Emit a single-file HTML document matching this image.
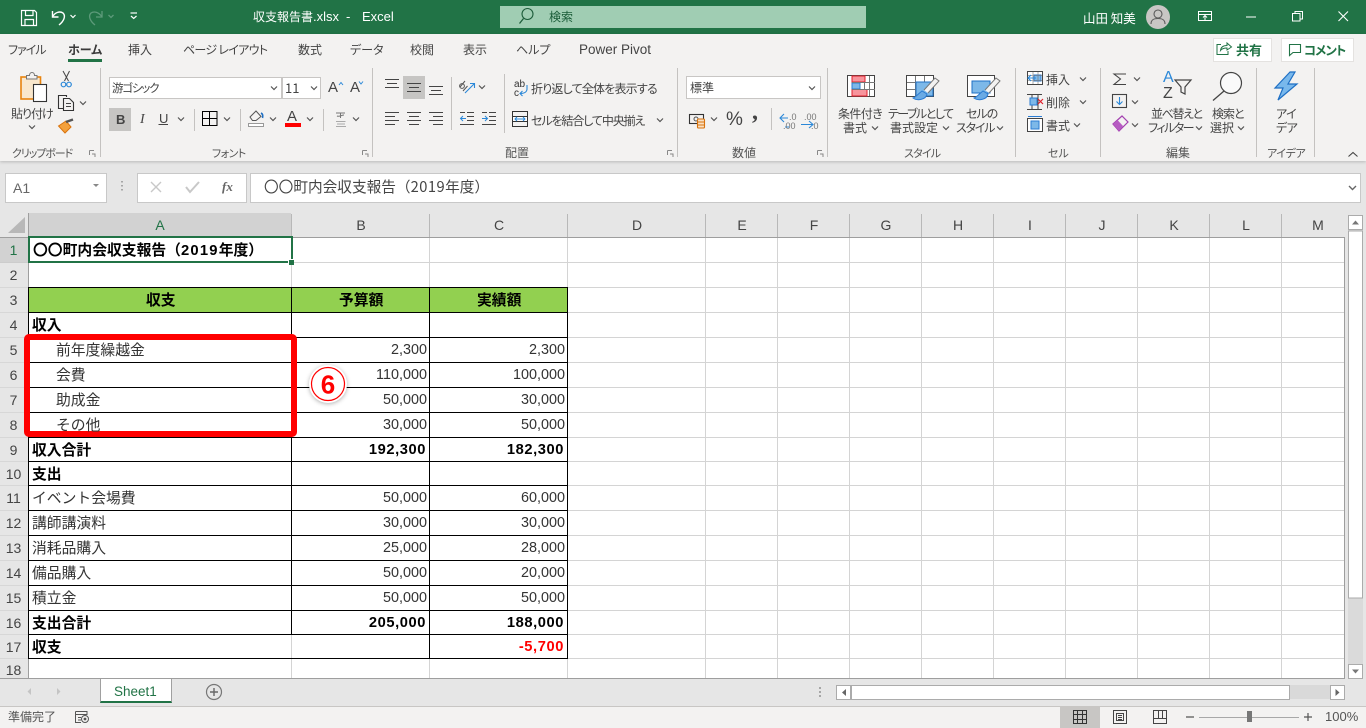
<!DOCTYPE html>
<html lang="ja"><head><meta charset="utf-8"><title>収支報告書.xlsx - Excel</title>
<style>
html,body{margin:0;padding:0;width:1366px;height:728px;overflow:hidden;background:#e6e6e6}
body{position:relative;font-family:"Liberation Sans","Noto Sans CJK JP",sans-serif;color:#444}
svg.o{position:absolute;left:0;top:0}
.b{position:absolute}
.t{position:absolute;white-space:nowrap;line-height:14px;font-size:12px;margin-top:1px;font-feature-settings:"palt";font-family:"Noto Sans CJK JP","Liberation Sans",sans-serif;color:#444}
.g{font-size:11px;color:#555}
.w{color:#fff}
.c{position:absolute;white-space:nowrap;font-size:14.8px;line-height:24px;height:24px;margin-top:1px;color:#333;font-family:"Liberation Sans","Noto Sans CJK JP",sans-serif}
.n{font-size:14.4px;text-align:right;width:130px;margin-top:0}
.bd{font-weight:bold;color:#000}
.n.bd{font-size:14.67px;letter-spacing:.6px}
.h{position:absolute;width:72px;text-align:center;font-size:14px;line-height:24px;top:213px;color:#444}
.r{position:absolute;left:0;width:27px;text-align:center;font-size:14px;line-height:24px;color:#444}
</style></head><body>
<div class="b" style="left:0;top:0;width:1366px;height:34px;background:#217346"></div>
<div class="b" style="left:0;top:34px;width:1366px;height:127px;background:#f3f2f1;box-shadow:0 1px 3px rgba(0,0,0,.2)"></div>
<div class="b" style="left:500px;top:6px;width:366px;height:22px;background:#a0cdb3"></div>
<div class="b" style="left:1213px;top:38px;width:57px;height:22px;background:#fff;border:1px solid #e4e2e0;box-sizing:content-box"></div>
<div class="b" style="left:1281px;top:38px;width:71px;height:22px;background:#fff;border:1px solid #e4e2e0"></div>
<div class="b" style="left:109px;top:77px;width:171px;height:20px;background:#fff;border:1px solid #c8c6c4"></div>
<div class="b" style="left:282px;top:77px;width:37px;height:20px;background:#fff;border:1px solid #c8c6c4"></div>
<div class="b" style="left:109px;top:108px;width:22px;height:23px;background:#c6c5c3"></div>
<div class="b" style="left:403px;top:76px;width:22px;height:23px;background:#c6c5c3"></div>
<div class="b" style="left:686px;top:76px;width:133px;height:21px;background:#fff;border:1px solid #c8c6c4"></div>
<div class="b" style="left:5px;top:173px;width:100px;height:28px;background:#fff;border:1px solid #c8c8c8"></div>
<div class="b" style="left:137px;top:173px;width:108px;height:28px;background:#fff;border:1px solid #c8c8c8"></div>
<div class="b" style="left:250px;top:173px;width:1109px;height:28px;background:#fff;border:1px solid #c8c8c8"></div>
<div class="b" style="left:29px;top:238px;width:1316px;height:441px;background:#fff"></div>
<div class="b" style="left:29px;top:213px;width:262px;height:24px;background:#d2d2d2"></div>
<div class="b" style="left:0;top:238px;width:28px;height:25px;background:#d2d2d2"></div>
<div class="b" style="left:29px;top:288px;width:538px;height:24px;background:#92d050"></div>
<div class="b" style="left:0;top:679px;width:1366px;height:27px;background:#e6e6e6"></div>
<div class="b" style="left:0;top:707px;width:1366px;height:21px;background:#f3f2f1;border-top:0"></div>
<div class="b" style="left:1060px;top:707px;width:40px;height:21px;background:#c8c6c4"></div>
<div class="b" style="left:100px;top:678px;width:72px;height:25px;background:#fff;border-left:1px solid #a0a0a0;border-right:1px solid #a0a0a0;box-sizing:border-box;border-bottom:2px solid #217346"></div>

<svg class="o" width="1366" height="728" viewBox="0 0 1366 728" fill="none">
<defs><path id="ch" d="M-3 -1.5L0 1.5L3 -1.5" stroke="#555" stroke-width="1.2"/>
<path id="la" d="M-3 -3h3v3" stroke="#888" stroke-width="1"/></defs>
<!-- grid lines -->
<g stroke="#d4d4d4" shape-rendering="crispEdges">
<path d="M29 262.500H1345M29 287.500H1345M29 312.500H1345M29 337.500H1345M29 362.500H1345M29 387.500H1345M29 412.500H1345M29 437.500H1345M29 461.500H1345M29 485.500H1345M29 510.500H1345M29 535.500H1345M29 560.500H1345M29 585.500H1345M29 610.500H1345M29 634.500H1345M29 658.500H1345"/>
<path d="M291.500 238V679M429.500 238V679M567.500 238V679M705.500 238V679M777.500 238V679M849.500 238V679M921.500 238V679M993.500 238V679M1065.500 238V679M1137.500 238V679M1209.500 238V679M1281.500 238V679"/>
</g>
<g stroke="#c6c6c6" shape-rendering="crispEdges">
<path d="M0 262.500H28M0 287.500H28M0 312.500H28M0 337.500H28M0 362.500H28M0 387.500H28M0 412.500H28M0 437.500H28M0 461.500H28M0 485.500H28M0 510.500H28M0 535.500H28M0 560.500H28M0 585.500H28M0 610.500H28M0 634.500H28M0 658.500H28" opacity=".45"/>
<path d="M291.500 214V237M429.500 214V237M567.500 214V237M705.500 214V237M777.500 214V237M849.500 214V237M921.500 214V237M993.500 214V237M1065.500 214V237M1137.500 214V237M1209.500 214V237M1281.500 214V237" stroke="#b8b8b8"/>
</g>
<g stroke="#9e9e9e" shape-rendering="crispEdges">
<path d="M0 237.500H1345M28.500 213V679M1344.500 237V679M0 678.500H1345"/>
</g>
<path d="M8 233H25V217Z" fill="#b8b8b8"/>
<!-- table borders -->
<g stroke="#000" shape-rendering="crispEdges">
<path d="M29 287.500H568M29 312.500H568M29 337.500H568M29 362.500H568M29 387.500H568M29 412.500H568M29 437.500H568M29 461.500H568M29 485.500H568M29 510.500H568M29 535.500H568M29 560.500H568M29 585.500H568M29 610.500H568M29 634.500H568M29 658.500H568"/>
<path d="M28.500 287V659M291.500 287V635M429.500 287V659M567.500 287V659"/>
</g>
<!-- selection -->
<rect x="29" y="237" width="263" height="25" stroke="#217346" stroke-width="2" shape-rendering="crispEdges"/>
<rect x="288" y="259" width="6" height="6" fill="#fff" shape-rendering="crispEdges"/>
<rect x="289" y="260" width="5" height="5" fill="#217346" shape-rendering="crispEdges"/>

<!-- title bar icons -->
<g stroke="#fff" stroke-width="1.2">
<path d="M21.500 10.500H34.500L36.500 12.500V25.500H21.500Z"/><path d="M25.500 10.500V15.500H33V10.500M25 25.500V19.500H33.500V25.500"/>
<path d="M52.500 11V17H58.500" stroke-width="1.400"/><path d="M52.500 17C55 12 60 11 63 13C66 16 64 21 59 25" stroke-width="1.400"/>
<path d="M70.500 15L73 17.500L75.500 15"/>
<path d="M130.500 13H137" /><path d="M131 16L133.700 18.500L136.500 16"/>
</g>
<g stroke="#5d9a7a" stroke-width="1.300"><path d="M102 11V17H96"/><path d="M102 17C99 12 94 11 91 13C88 16 90 21 95 25"/><path d="M108.500 15L111 17.500L113.500 15"/></g>
<g stroke="#fff" stroke-width="1">
<rect x="1198.500" y="11.500" width="13" height="9"/><path d="M1198 14.500H1212M1205 20V16M1203 17.500L1205 15.500L1207 17.500"/>
<path d="M1246 17H1256" /><path d="M1292.500 13.500H1300V21H1292.500ZM1295 13V11.500H1302.500V19H1300"/>
<path d="M1338.500 11.500L1348 21M1348 11.500L1338.500 21" stroke-width="1.100"/>
</g>
<circle cx="527.500" cy="14" r="5.500" stroke="#1d5c3a" stroke-width="1.100"/><path d="M523.500 18.500L519.500 23.500" stroke="#1d5c3a" stroke-width="1.300"/>
<circle cx="1158" cy="17" r="12" fill="#c8c6c4"/>
<circle cx="1158" cy="14" r="4" stroke="#5a5a5a" stroke-width="1.100"/><path d="M1151 24C1151 19.500 1154 18.500 1158 18.500C1162 18.500 1165 19.500 1165 24" stroke="#5a5a5a" stroke-width="1.100"/>
<!-- share/comment -->
<path d="M1221 44.500H1217V54.500H1228V51M1220.500 50.500C1221 46.500 1224 45.500 1227 45.500V43L1231.500 47L1227 50V48C1224.500 48 1222 48.500 1220.500 50.500Z" stroke="#217346" stroke-width="1"/>
<path d="M1289.500 44.500H1300.500V52.500H1293L1289.500 55.500Z" stroke="#217346" stroke-width="1.100"/>
<!-- tab underline -->
<rect x="68" y="59" width="34" height="3" fill="#217346"/>
<!-- separators -->
<g stroke="#c4c2c0" shape-rendering="crispEdges">
<path d="M100.500 68V157M372.500 68V157M677.500 68V157M827.500 68V157M1015.500 68V157M1100.500 68V157M1256.500 68V157M1314.500 68V157"/>
<path d="M194.500 109V131M240.500 109V131M323.500 109V131M451.500 77V130M504.500 74V133M771.500 108V130"/>
</g>
<!-- launchers -->
<g><use href="#la" x="95" y="157"/><use href="#la" x="368" y="157"/><use href="#la" x="673" y="157"/><use href="#la" x="823" y="157"/></g>
<g stroke="#888" fill="none"><path d="M89.500 150.500H94M89.500 150.500V155M362.500 150.500H367M362.500 150.500V155M667.500 150.500H672M667.500 150.500V155M817.500 150.500H822M817.500 150.500V155"/></g>
<!-- clipboard -->
<rect x="21" y="77" width="19.500" height="22" fill="#f9e7cc" stroke="#e8830c" stroke-width="1.600"/>
<path d="M26.500 79V75.500H29.500C29.500 71.500 34.500 71.500 34.500 75.500H37V79Z" fill="#f3f2f1" stroke="#777" stroke-width="1"/>
<rect x="33.500" y="84.500" width="13" height="17" fill="#fff" stroke="#333" stroke-width="1.100"/>
<path d="M63 71L68.500 81M69.500 71L64.500 81" stroke="#444" stroke-width="1"/><circle cx="63.500" cy="84.500" r="2.300" stroke="#2b88d8" stroke-width="1.200"/><circle cx="69" cy="84.500" r="2.300" stroke="#2b88d8" stroke-width="1.200"/>
<path d="M63 108.500H58.500V95.500H66.500V97" stroke="#333" stroke-width="1.100"/><path d="M63.500 98.500H69.500L73.500 102.500V110.500H63.500Z" fill="#f3f2f1" stroke="#333" stroke-width="1.100"/><path d="M66 103.500H71M66 106.500H71" stroke="#444"/>
<path d="M58.500 126L66 121L71 127L65 133Z" fill="#f4a13c" stroke="#d9730d" stroke-width="1"/><path d="M66 122L73 119.500" stroke="#555" stroke-width="2.500"/>
<use href="#ch" x="32" y="127"/><use href="#ch" x="83" y="103"/>
<!-- font -->
<use href="#ch" x="274" y="88"/><use href="#ch" x="314" y="88"/>
<path d="M339 85L341 82.500L343 85" stroke="#2b88d8"/><path d="M359 81.500L361 84L363 81.500" stroke="#2b88d8"/>
<path d="M158.500 124.500H168" stroke="#444"/>
<use href="#ch" x="181" y="119"/><use href="#ch" x="227" y="119"/><use href="#ch" x="273" y="119"/><use href="#ch" x="310" y="119"/><use href="#ch" x="356" y="119"/>
<path d="M202.500 111.500H217V125.500H202.500ZM209.500 111.500V125.500M202.500 118.500H217" stroke="#000" stroke-width="1.100" shape-rendering="crispEdges"/>
<path d="M250 117L256 111L261 116.500L256 120.500H252.500Z" stroke="#555"/><path d="M261 113C263 114 263 116 262.500 118" stroke="#1e6fc4" stroke-width="1.600"/><rect x="248.500" y="123.500" width="15" height="3" fill="#fff" stroke="#999"/>
<rect x="285" y="123" width="16" height="4" fill="#f00"/>
<path d="M336 113H345M340.500 113V118M337 116C339 117 342 115 344 115" stroke="#777"/><path d="M336 121.500H345.500M337 124H345M336 126.500H346" stroke="#aaa"/>
<!-- alignment -->
<g stroke="#444" shape-rendering="crispEdges">
<path d="M385 79.500H399M387 83.500H397M385 87.500H399"/>
<path d="M407 83.500H421M409 87.500H419M407 91.500H421"/>
<path d="M429 86.500H443M431 90.500H441M429 94.500H443"/>
<path d="M385 112.500H399M385 116.500H395M385 120.500H399M385 124.500H395"/>
<path d="M407 112.500H421M409 116.500H419M407 120.500H421M409 124.500H419"/>
<path d="M429 112.500H443M433 116.500H443M429 120.500H443M433 124.500H443"/>
<path d="M460 124.500H474M467 112.500H474M467 116.500H474M467 120.500H474M460 112.500H465M482 124.500H496M489 112.500H496M489 116.500H496M489 120.500H496M482 112.500H487"/>
</g>
<path d="M466 118.500H460.500M463 116L460.500 118.500L463 121M482 118.500H487.500M485 116L487.500 118.500L485 121" stroke="#2b88d8"/>
<path d="M465 93L474 84M470 83.500H474.500V88" stroke="#2b88d8" stroke-width="1.100"/><path d="M460 87L465 81M463 91L467.500 86" stroke="#555"/><circle cx="462" cy="86" r="2.400" stroke="#555"/>
<use href="#ch" x="482" y="87"/>
<path d="M527 85V89C527 92 524 93.500 520 93.500M522.500 91L520 93.500L522.500 96" stroke="#2b88d8" stroke-width="1.100"/>
<rect x="512.500" y="111.500" width="15" height="15" stroke="#333"/><rect x="513" y="116" width="14" height="6" fill="#fff"/><path d="M513 116.500H527M513 121.500H527" stroke="#333"/><path d="M515 119H525M517 117L515 119L517 121M523 117L525 119L523 121" stroke="#2b88d8"/>
<use href="#ch" x="660" y="120"/>
<!-- number -->
<use href="#ch" x="812" y="88"/>
<rect x="689.500" y="114.500" width="14" height="9" stroke="#333" stroke-width="1.100"/><circle cx="696" cy="119" r="2" stroke="#555"/>
<rect x="697.500" y="119" width="7" height="9" rx="1" fill="#f9e0c3" stroke="#d9730d" stroke-width="1.100"/><path d="M698 122H704M698 125H704" stroke="#d9730d"/>
<use href="#ch" x="714" y="119"/>
<path d="M784 114L780 118L784 122M780 118H788M789 127L785 127" stroke="#2b88d8" stroke-width="1.100"/>
<path d="M809 121L813 124.500L809 128M801 124.500H813" stroke="#2b88d8" stroke-width="1.100"/>
<!-- styles -->
<g shape-rendering="crispEdges">
<rect x="847.500" y="75.500" width="27" height="21" stroke="#444" stroke-width="1.100" fill="#fff"/>
<rect x="852" y="76" width="13" height="6" fill="#f7949c" stroke="#e0202c"/><rect x="852" y="83" width="8" height="6" fill="#7db8e8" stroke="#2b7cd3"/><rect x="852" y="89.500" width="15" height="6.500" fill="#f7949c" stroke="#e0202c"/>
<path d="M869.500 76V96M864.500 83V89M852 82.500H875M852 89.500H875" stroke="#777"/>
<rect x="906.500" y="75.500" width="27" height="21" stroke="#444" stroke-width="1.100" fill="#fff"/>
<path d="M915.500 76V96M924.500 76V96M907 82.500H933M907 89.500H933" stroke="#777"/>
<rect x="916" y="82" width="17" height="14" fill="#7db8e8" stroke="#1e6fc4"/>
<rect x="967.500" y="75.500" width="27" height="21" stroke="#444" stroke-width="1.100" fill="#fff"/>
<rect x="972" y="81" width="18" height="12" fill="#7db8e8" stroke="#1e6fc4"/>
</g>
<g><path d="M924 90L935 78L939 81L928 93" fill="#f3f2f1" stroke="#777"/><path d="M922 91C918 94 916 97 913 98C917 101 926 100 927 94Z" fill="#6aaae4" stroke="#2b7cd3"/>
<path d="M985 90L996 78L1000 81L989 93" fill="#f3f2f1" stroke="#777"/><path d="M983 91C979 94 977 97 974 98C978 101 987 100 988 94Z" fill="#6aaae4" stroke="#2b7cd3"/></g>
<!-- cells group -->
<g shape-rendering="crispEdges">
<rect x="1027.500" y="71.500" width="15" height="13" stroke="#444" fill="#fff"/><rect x="1034" y="75" width="7" height="6" fill="#7db8e8" stroke="#2b7cd3"/><path d="M1033 72V84M1038 72V84M1028 75.500H1042M1028 80.500H1042" stroke="#777" opacity=".6"/>
<path d="M1027 94.500H1042M1027 109.500H1042M1032 95V109M1038 95V109" stroke="#444"/><rect x="1030" y="98" width="7" height="7" fill="#7db8e8" stroke="#2b7cd3"/>
<rect x="1027.500" y="118.500" width="15" height="13" stroke="#444" fill="#fff"/><rect x="1031" y="121" width="8" height="8" fill="#7db8e8" stroke="#2b7cd3"/><path d="M1028 116.500H1042" stroke="#2b7cd3"/>
</g>
<path d="M1031 75L1028 78L1031 81M1028 78H1036" stroke="#2b88d8" stroke-width="1.100"/>
<path d="M1038 99L1043 104M1043 99L1038 104" stroke="#e0202c" stroke-width="1.200"/>
<use href="#ch" x="1083" y="79"/><use href="#ch" x="1083" y="102"/><use href="#ch" x="1077" y="125"/>
<!-- edit -->
<path d="M1126 74H1114L1120.500 79L1114 84.500H1126" stroke="#444" stroke-width="1.100"/>
<rect x="1112.500" y="94.500" width="14" height="13" stroke="#444" stroke-width="1.100"/><path d="M1119.500 97V104.500M1116.500 101.500L1119.500 104.500L1122.500 101.500" stroke="#2b88d8" stroke-width="1.100"/>
<path d="M1113 124L1122 116L1128 122L1119 131Z" fill="#f3f2f1" stroke="#a33fb0" stroke-width="1.200"/><path d="M1113 124L1117.500 120L1123 126L1119 131Z" fill="#b65cc2"/>
<use href="#ch" x="1137" y="79"/><use href="#ch" x="1135" y="102"/><use href="#ch" x="1135" y="125"/>
<path d="M1175 80H1191L1185 87V94L1181 92V87Z" stroke="#444" stroke-width="1.200"/>
<circle cx="1231" cy="83" r="10.500" stroke="#444" stroke-width="1.200" fill="#fafafa"/><path d="M1224 91L1213 100.500" stroke="#444" stroke-width="1.300"/>
<path d="M1290 72L1275 88H1283L1278 100L1297 84H1288L1295 72Z" fill="#79b8ec" stroke="#1e6fc4" stroke-width="1.200"/>
<path d="M1348.500 156.500L1353 152.500L1357.500 156.500" stroke="#444" stroke-width="1.100"/>
<!-- other chevrons in style text -->
<use href="#ch" x="875" y="128"/><use href="#ch" x="946" y="128"/><use href="#ch" x="1000" y="128"/><use href="#ch" x="1199" y="128"/><use href="#ch" x="1241" y="128"/>
<!-- formula -->
<path d="M96 185H102L99 188Z" transform="translate(-3 -1)" fill="#888"/>
<path d="M122 180V181.500M122 184V185.500M122 188V189.500" stroke="#a6a6a6" stroke-width="2" transform="translate(0 1)"/>
<path d="M151 182L161 192M161 182L151 192" stroke="#c8c8c8" stroke-width="1.400"/>
<path d="M186 187L190 192L199 182" stroke="#c8c8c8" stroke-width="2"/>
<path d="M1349 186L1352.500 189.500L1356 186" stroke="#666" stroke-width="1.400"/>
<!-- red box -->
<rect x="27" y="337" width="267" height="97" rx="2" stroke="#f00" stroke-width="6"/>
<!-- callout -->
<circle cx="328" cy="384" r="19" fill="#fff" style="filter:drop-shadow(0 1px 2px rgba(0,0,0,.3))"/>
<circle cx="328" cy="384" r="16.500" stroke="#f00" stroke-width="1.200"/>
<text x="328" y="393.500" text-anchor="middle" font-family="Liberation Sans" font-weight="bold" font-size="26" fill="#f00">6</text>
<!-- v scrollbar -->
<rect x="1348" y="215" width="15" height="464" fill="#dadada"/>
<rect x="1348.500" y="215.500" width="14" height="14" fill="#fff" stroke="#ababab"/>
<rect x="1348.500" y="231" width="14" height="367" fill="#fff" stroke="#ababab"/>
<rect x="1348.500" y="664.500" width="14" height="14" fill="#fff" stroke="#ababab"/>
<path d="M1352 224.500H1359L1355.500 220.500Z" fill="#777"/><path d="M1352 669.500H1359L1355.500 673.500Z" fill="#777"/>
<!-- bottom -->
<path d="M0 706.500H1366" stroke="#c8c6c4" shape-rendering="crispEdges"/>
<path d="M31 688V695L27.500 691.500ZM57 688V695L60.500 691.500Z" fill="#c4c4c4"/>
<circle cx="214" cy="692" r="7.500" stroke="#777" stroke-width="1.200"/><path d="M214 688V696M210 692H218" stroke="#666" stroke-width="1.400"/>
<path d="M820 687V689M820 691V693M820 695V697" stroke="#a6a6a6" stroke-width="2"/>
<rect x="1289" y="685" width="42" height="14" fill="#d9d9d9"/>
<rect x="836.500" y="685.500" width="14" height="14" fill="#fff" stroke="#ababab"/>
<rect x="851.500" y="685.500" width="438" height="14" fill="#fff" stroke="#ababab"/>
<rect x="1330.500" y="685.500" width="14" height="14" fill="#fff" stroke="#ababab"/>
<path d="M846 689V696L842 692.500ZM1335.500 689V696L1339.500 692.500Z" fill="#666"/>
<path d="M75.500 711.500H87V715M75.500 711.500V722.500H81M76 714.500H87M78 717.500H81M78 720H81" stroke="#555"/><circle cx="85" cy="719" r="3.500" stroke="#555"/><circle cx="85" cy="719" r="1.400" fill="#555"/>
<g stroke="#333" shape-rendering="crispEdges"><path d="M1073.500 710.500H1086.500V723.500H1073.500ZM1077.500 710.500V723.500M1082.500 710.500V723.500M1073.500 714.500H1086.500M1073.500 719.500H1086.500"/></g>
<g stroke="#444" shape-rendering="crispEdges"><path d="M1113.500 710.500H1126.500V723.500H1113.500ZM1116.500 713.500H1123.500V720.500H1116.500ZM1118 715.500H1122M1118 717.500H1122M1118 719.500H1122"/>
<path d="M1153.500 710.500H1166.500V723.500H1153.500ZM1158.500 710.500V718.500H1162.500V710.500M1153.500 718.500H1166.500"/></g>
<path d="M1186 717H1194M1304 717H1312M1308 713V721" stroke="#555" stroke-width="1.200"/>
<path d="M1199 717.500H1299" stroke="#a8a8a8" shape-rendering="crispEdges"/>
<rect x="1247" y="711" width="5" height="11" fill="#777"/>
</svg>

<!-- title -->
<div class="t w" style="left:253px;top:9px">収支報告書</div>
<div class="t w" style="left:313px;top:9px;font-family:'Liberation Sans';font-size:13px">.xlsx</div>
<div class="t w" style="left:346px;top:9px;font-family:'Liberation Sans';font-size:13px">-</div>
<div class="t w" style="left:362px;top:9px;font-family:'Liberation Sans';font-size:13px">Excel</div>
<div class="t" style="left:549px;top:9px;color:#1a5c38">検索</div>
<div class="t w" style="left:1083px;top:10px;font-size:12.500px">山田 知美</div>
<!-- tabs -->
<div class="t" style="left:8px;top:42px;letter-spacing:-1px">ファイル</div>
<div class="t" style="left:68px;top:42px;font-weight:bold;color:#3a3a3a">ホーム</div>
<div class="t" style="left:128px;top:42px">挿入</div>
<div class="t" style="left:183px;top:42px;letter-spacing:-.7px">ページ レイアウト</div>
<div class="t" style="left:298px;top:42px">数式</div>
<div class="t" style="left:350px;top:42px">データ</div>
<div class="t" style="left:410px;top:42px">校閲</div>
<div class="t" style="left:463px;top:42px">表示</div>
<div class="t" style="left:516px;top:42px">ヘルプ</div>
<div class="t" style="left:579px;top:42px;font-family:'Liberation Sans',sans-serif;font-size:13.500px">Power Pivot</div>
<div class="t" style="left:1236px;top:42px;font-weight:bold;color:#217346;font-size:13px">共有</div>
<div class="t" style="left:1304px;top:42px;font-weight:bold;color:#217346;font-size:12.500px;letter-spacing:-1px">コメント</div>
<!-- ribbon -->
<div class="t" style="left:11px;top:106px;letter-spacing:-1px">貼り付け</div>
<div class="t" style="left:112px;top:80px;font-size:11.500px;letter-spacing:-1.200px">游ゴシック</div>
<div class="t" style="left:285px;top:80px;font-size:13px">11</div>
<div class="t" style="left:328px;top:80px;font-size:15px;font-family:'Liberation Sans'">A</div>
<div class="t" style="left:350px;top:80px;font-size:15px;font-family:'Liberation Sans'">A</div>
<div class="t" style="left:116px;top:112px;font-family:'Liberation Sans';font-weight:bold;font-size:13px">B</div>
<div class="t" style="left:140px;top:112px;font-family:'Liberation Serif';font-style:italic;font-size:14px">I</div>
<div class="t" style="left:159px;top:111px;font-family:'Liberation Sans';font-size:13px">U</div>
<div class="t" style="left:287px;top:109px;font-family:'Liberation Sans';font-size:15px">A</div>
<div class="t" style="left:514px;top:79px;font-size:10px;font-family:'Liberation Sans';color:#333;line-height:9px">ab<br>c</div>
<div class="t" style="left:531px;top:81px;letter-spacing:-.8px">折り返して全体を表示する</div>
<div class="t" style="left:531px;top:113px;letter-spacing:-1.100px">セルを結合して中央揃え</div>
<div class="t" style="left:690px;top:80px">標準</div>
<div class="t" style="left:726px;top:111px;font-family:'Liberation Sans';font-size:19px;line-height:16px">%</div>
<div class="t" style="left:752px;top:103px;font-family:'Liberation Serif';font-weight:bold;font-size:24px;line-height:16px">,</div>
<div class="t" style="left:789px;top:112px;font-family:'Liberation Sans';font-size:9px;color:#777;line-height:9px">.0<br><span style="margin-left:-6px">.00</span></div>
<div class="t" style="left:804px;top:112px;font-family:'Liberation Sans';font-size:9px;color:#777;line-height:9px">.00<br><span style="margin-left:7px">.0</span></div>
<div class="t" style="left:838px;top:106px;letter-spacing:-.6px">条件付き</div>
<div class="t" style="left:843px;top:120px">書式</div>
<div class="t" style="left:888px;top:106px;letter-spacing:-1.500px">テーブルとして</div>
<div class="t" style="left:890px;top:120px">書式設定</div>
<div class="t" style="left:966px;top:106px;letter-spacing:-1px">セルの</div>
<div class="t" style="left:956px;top:120px;letter-spacing:-1.200px">スタイル</div>
<div class="t" style="left:1046px;top:72px">挿入</div>
<div class="t" style="left:1046px;top:95px">削除</div>
<div class="t" style="left:1046px;top:118px">書式</div>
<div class="t" style="left:1163px;top:70px;font-family:'Liberation Sans';font-size:16px;color:#2b88d8">A</div>
<div class="t" style="left:1163px;top:86px;font-family:'Liberation Sans';font-size:16px">Z</div>
<div class="t" style="left:1151px;top:106px;letter-spacing:-1.400px">並べ替えと</div>
<div class="t" style="left:1148px;top:120px;letter-spacing:-1.500px">フィルター</div>
<div class="t" style="left:1212px;top:106px;letter-spacing:-1px">検索と</div>
<div class="t" style="left:1210px;top:120px">選択</div>
<div class="t" style="left:1276px;top:106px;letter-spacing:-.5px">アイ</div>
<div class="t" style="left:1276px;top:120px;letter-spacing:-.5px">デア</div>
<div class="t g" style="left:12px;top:145px;letter-spacing:-1.100px">クリップボード</div>
<div class="t g" style="left:212px;top:145px;letter-spacing:-.6px">フォント</div>
<div class="t g" style="left:505px;top:145px;font-size:12px">配置</div>
<div class="t g" style="left:732px;top:145px;font-size:12px">数値</div>
<div class="t g" style="left:904px;top:145px;letter-spacing:-.8px">スタイル</div>
<div class="t g" style="left:1048px;top:145px">セル</div>
<div class="t g" style="left:1166px;top:145px;font-size:12px">編集</div>
<div class="t g" style="left:1267px;top:145px;letter-spacing:-.4px">アイデア</div>
<!-- formula bar -->
<div class="t" style="left:13px;top:180px;font-family:'Liberation Sans';font-size:14px;color:#666">A1</div>
<div class="t" style="left:222px;top:179px;font-family:'Liberation Serif';font-style:italic;font-weight:bold;font-size:13px;color:#666">fx</div>
<div class="t" style="left:264px;top:179px;font-size:14.670px;font-feature-settings:normal;color:#444">〇〇町内会収支報告（<span style="letter-spacing:.5px">2019</span>年度）</div>
<!-- column heads -->
<div class="h" style="left:124px;color:#217346">A</div>
<div class="h" style="left:325px">B</div>
<div class="h" style="left:463px">C</div>
<div class="h" style="left:601px">D</div>
<div class="h" style="left:706px">E</div>
<div class="h" style="left:778px">F</div>
<div class="h" style="left:850px">G</div>
<div class="h" style="left:922px">H</div>
<div class="h" style="left:994px">I</div>
<div class="h" style="left:1066px">J</div>
<div class="h" style="left:1138px">K</div>
<div class="h" style="left:1210px">L</div>
<div class="h" style="left:1282px">M</div>
<!-- row heads -->
<div class="r" style="top:238px;color:#217346">1</div>
<div class="r" style="top:263px">2</div>
<div class="r" style="top:288px">3</div>
<div class="r" style="top:313px">4</div>
<div class="r" style="top:338px">5</div>
<div class="r" style="top:363px">6</div>
<div class="r" style="top:388px">7</div>
<div class="r" style="top:413px">8</div>
<div class="r" style="top:438px">9</div>
<div class="r" style="top:462px">10</div>
<div class="r" style="top:486px">11</div>
<div class="r" style="top:511px">12</div>
<div class="r" style="top:536px">13</div>
<div class="r" style="top:561px">14</div>
<div class="r" style="top:586px">15</div>
<div class="r" style="top:611px">16</div>
<div class="r" style="top:635px">17</div>
<div class="r" style="top:659px;line-height:22px">18</div>
<!-- cells -->
<div class="c bd" style="left:33px;top:238px">〇〇町内会収支報告（<span style="letter-spacing:1.200px">2019</span>年度）</div>
<div class="c bd" style="left:146px;top:288px">収支</div>
<div class="c bd" style="left:339px;top:288px">予算額</div>
<div class="c bd" style="left:477px;top:288px">実績額</div>
<div class="c bd" style="left:32px;top:313px">収入</div>
<div class="c" style="left:56px;top:338px">前年度繰越金</div>
<div class="c" style="left:56px;top:363px">会費</div>
<div class="c" style="left:56px;top:388px">助成金</div>
<div class="c" style="left:56px;top:413px">その他</div>
<div class="c bd" style="left:32px;top:438px">収入合計</div>
<div class="c bd" style="left:32px;top:462px">支出</div>
<div class="c" style="left:32px;top:486px">イベント会場費</div>
<div class="c" style="left:32px;top:511px">講師講演料</div>
<div class="c" style="left:32px;top:536px">消耗品購入</div>
<div class="c" style="left:32px;top:561px">備品購入</div>
<div class="c" style="left:32px;top:586px">積立金</div>
<div class="c bd" style="left:32px;top:611px">支出合計</div>
<div class="c bd" style="left:32px;top:635px">収支</div>
<div class="c n" style="left:297px;top:338px">2,300</div><div class="c n" style="left:435px;top:338px">2,300</div>
<div class="c n" style="left:297px;top:363px">110,000</div><div class="c n" style="left:435px;top:363px">100,000</div>
<div class="c n" style="left:297px;top:388px">50,000</div><div class="c n" style="left:435px;top:388px">30,000</div>
<div class="c n" style="left:297px;top:413px">30,000</div><div class="c n" style="left:435px;top:413px">50,000</div>
<div class="c n bd" style="left:296px;top:438px">192,300</div><div class="c n bd" style="left:434px;top:438px">182,300</div>
<div class="c n" style="left:297px;top:486px">50,000</div><div class="c n" style="left:435px;top:486px">60,000</div>
<div class="c n" style="left:297px;top:511px">30,000</div><div class="c n" style="left:435px;top:511px">30,000</div>
<div class="c n" style="left:297px;top:536px">25,000</div><div class="c n" style="left:435px;top:536px">28,000</div>
<div class="c n" style="left:297px;top:561px">50,000</div><div class="c n" style="left:435px;top:561px">20,000</div>
<div class="c n" style="left:297px;top:586px">50,000</div><div class="c n" style="left:435px;top:586px">50,000</div>
<div class="c n bd" style="left:296px;top:611px">205,000</div><div class="c n bd" style="left:434px;top:611px">188,000</div>
<div class="c n bd" style="left:434px;top:635px;color:#f00">-5,700</div>
<!-- bottom -->
<div class="t" style="left:114px;top:684px;font-family:'Liberation Sans';font-size:13.500px;color:#217346">Sheet1</div>
<div class="t" style="left:8px;top:709px;color:#555">準備完了</div>
<div class="t" style="left:1325px;top:709px;font-family:'Liberation Sans';font-size:13px;color:#555">100%</div>
</body></html>
